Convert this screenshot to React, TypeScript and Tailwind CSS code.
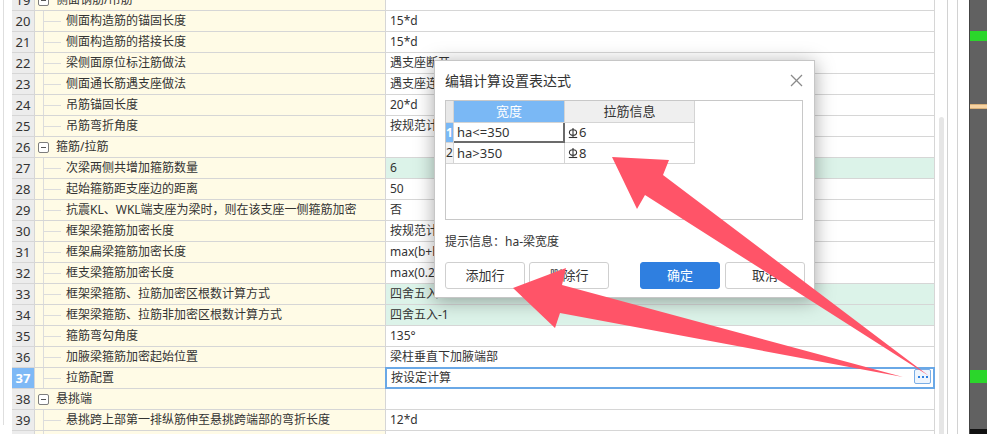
import React from "react";

type Row = {
  n: number;
  name: string;
  value?: string;
  group?: boolean;
  green?: boolean;
  selected?: boolean;
};

const rows: Row[] = [
  { n: 19, name: "侧面钢筋/吊筋", group: true },
  { n: 20, name: "侧面构造筋的锚固长度", value: "15*d" },
  { n: 21, name: "侧面构造筋的搭接长度", value: "15*d" },
  { n: 22, name: "梁侧面原位标注筋做法", value: "遇支座断开" },
  { n: 23, name: "侧面通长筋遇支座做法", value: "遇支座连续通过" },
  { n: 24, name: "吊筋锚固长度", value: "20*d" },
  { n: 25, name: "吊筋弯折角度", value: "按规范计算" },
  { n: 26, name: "箍筋/拉筋", group: true },
  { n: 27, name: "次梁两侧共增加箍筋数量", value: "6", green: true },
  { n: 28, name: "起始箍筋距支座边的距离", value: "50" },
  { n: 29, name: "抗震KL、WKL端支座为梁时，则在该支座一侧箍筋加密", value: "否" },
  { n: 30, name: "框架梁箍筋加密长度", value: "按规范计算" },
  { n: 31, name: "框架扁梁箍筋加密长度", value: "max(b+hb,lae,C)" },
  { n: 32, name: "框支梁箍筋加密长度", value: "max(0.2*Ln,1.5*hb)" },
  { n: 33, name: "框架梁箍筋、拉筋加密区根数计算方式", value: "四舍五入+1", green: true },
  { n: 34, name: "框架梁箍筋、拉筋非加密区根数计算方式", value: "四舍五入-1", green: true },
  { n: 35, name: "箍筋弯勾角度", value: "135°" },
  { n: 36, name: "加腋梁箍筋加密起始位置", value: "梁柱垂直下加腋端部" },
  { n: 37, name: "拉筋配置", value: "按设定计算", selected: true },
  { n: 38, name: "悬挑端", group: true },
  { n: 39, name: "悬挑跨上部第一排纵筋伸至悬挑跨端部的弯折长度", value: "12*d" },
  { n: 40, name: "", value: "" },
];

function RebarMark() {
  return (
    <svg width="10" height="12" viewBox="0 0 10 12" className="mr-[1px] inline-block">
      <ellipse cx="5" cy="5.5" rx="3.6" ry="2.8" fill="none" stroke="#333" strokeWidth="1.1" />
      <line x1="5" y1="1" x2="5" y2="10" stroke="#333" strokeWidth="1.1" />
      <line x1="0.8" y1="10.5" x2="9.2" y2="10.5" stroke="#333" strokeWidth="1.1" />
    </svg>
  );
}

function TableRow({ row }: { row: Row }) {
  const cell = "h-[21px] border-b border-r border-[#d6d6d6] flex items-center";
  return (
    <div className="flex">
      <div
        className={`${cell} w-[23px] justify-center text-[13px] ${
          row.selected ? "bg-[#7eb9f6] font-bold text-white" : "bg-[#ececec] text-[#333]"
        }`}
      >
        {row.n}
      </div>
      <div className={`${cell} w-[351px] bg-[#fffbe6] text-[12px] text-[#333]`}>
        {row.group ? (
          <>
            <div className="ml-[3px] flex h-[11px] w-[11px] items-center justify-center rounded-[2px] border border-[#7d7d7d] bg-white">
              <div className="h-px w-[5px] bg-[#555]" />
            </div>
            <span className="ml-[7px]">{row.name}</span>
          </>
        ) : (
          <>
            <div className="ml-[8px] flex h-full w-[18px] items-center border-l border-[#dcdcdc]">
              <div className="h-px w-full bg-[#dcdcdc]" />
            </div>
            <span className="ml-[5px] whitespace-nowrap">{row.name}</span>
          </>
        )}
      </div>
      <div
        className={`${cell} relative w-[549px] pl-[4px] text-[12px] text-[#333] ${
          row.green ? "bg-[#dcf3e9]" : "bg-white"
        }`}
      >
        <span className={row.selected ? "pl-[1px]" : ""}>{row.value}</span>
        {row.selected && (
          <>
            <div className="absolute -top-px -left-px -right-px -bottom-px border-2 border-[#6aa8e6]" />
            <div className="absolute right-[3px] top-[1px] flex h-[15px] w-[17px] items-center justify-center gap-[2px] rounded-[2px] border border-[#7aaee6] bg-[#eef5fd]">
              <div className="h-[2px] w-[2px] bg-[#2f7fe0]" />
              <div className="h-[2px] w-[2px] bg-[#2f7fe0]" />
              <div className="h-[2px] w-[2px] bg-[#2f7fe0]" />
            </div>
          </>
        )}
      </div>
    </div>
  );
}

function Dialog() {
  const btn =
    "flex h-[27px] w-[80px] items-center justify-center rounded-[3px] border text-[13px]";
  return (
    <div className="absolute left-[434px] top-[60px] flex h-[238px] w-[381px] flex-col border border-[#c6c6c6] bg-white shadow-[0_3px_18px_rgba(0,0,0,0.35)]">
      <div className="flex h-[39px] items-center justify-between pl-[10px] pr-[11px]">
        <span className="text-[14px] text-[#333]">编辑计算设置表达式</span>
        <svg width="13" height="13" viewBox="0 0 13 13">
          <line x1="1" y1="1" x2="12" y2="12" stroke="#8a8a8a" strokeWidth="1.2" />
          <line x1="12" y1="1" x2="1" y2="12" stroke="#8a8a8a" strokeWidth="1.2" />
        </svg>
      </div>
      <div className="mx-[10px] h-[120px] w-[358px] border border-[#c8c8c8] text-[13px] text-[#333]">
        <div className="flex h-[22px]">
          <div className="w-[8px] border-b border-r border-[#d4d4d4] bg-[#e8e8e8]" />
          <div className="flex w-[111px] items-center justify-center border-b border-r border-[#d4d4d4] bg-[#7ab8f5] text-white">
            宽度
          </div>
          <div className="flex w-[130px] items-center justify-center border-b border-r border-[#d4d4d4] bg-[#efefef]">
            拉筋信息
          </div>
        </div>
        <div className="flex h-[20px]">
          <div className="flex w-[8px] items-center justify-center border-b border-r border-[#d4d4d4] bg-[#7ab8f5] text-[12px] font-bold text-white">
            1
          </div>
          <div className="flex w-[111px] items-center border-b-2 border-r-2 border-[#6b6b6b] pl-[3px]">
            ha&lt;=350
          </div>
          <div className="flex w-[130px] items-center border-b border-r border-[#d4d4d4] pl-[3px]">
            <RebarMark />6
          </div>
        </div>
        <div className="flex h-[21px]">
          <div className="flex w-[8px] items-center justify-center border-b border-r border-[#d4d4d4] bg-[#f3f3f3] text-[12px]">
            2
          </div>
          <div className="flex w-[111px] items-center border-b border-r border-[#d4d4d4] pl-[3px]">
            ha&gt;350
          </div>
          <div className="flex w-[130px] items-center border-b border-r border-[#d4d4d4] pl-[3px]">
            <RebarMark />8
          </div>
        </div>
      </div>
      <div className="ml-[10px] mt-[12px] flex h-[20px] items-center text-[12px] text-[#333]">
        提示信息：ha-梁宽度
      </div>
      <div className="ml-[10px] mt-[10px] flex">
        <div className={`${btn} border-[#cfcfcf] bg-white text-[#333]`}>添加行</div>
        <div className={`${btn} ml-[4px] border-[#cfcfcf] bg-white text-[#333]`}>删除行</div>
        <div className={`${btn} ml-[31px] border-[#2f7fe0] bg-[#2f7fe0] text-white`}>确定</div>
        <div className={`${btn} ml-[5px] border-[#cfcfcf] bg-white text-[#333]`}>取消</div>
      </div>
    </div>
  );
}

function Arrows() {
  return (
    <svg
      className="pointer-events-none absolute left-0 top-0"
      width="987"
      height="434"
      viewBox="0 0 987 434"
    >
      <polygon
        points="612,157 669,160 663,175 929,376 645,195 637,209"
        fill="#ff5468"
      />
      <polygon
        points="513,288 566,268 562,285 903,377 560,313 555,328"
        fill="#ff5468"
      />
    </svg>
  );
}

export default function App() {
  return (
    <div className="relative flex h-[434px] w-[987px] overflow-hidden bg-white font-['Noto_Sans','Noto_Sans_CJK_SC',sans-serif] leading-none">
      {/* left strip */}
      <div className="flex w-[12px]">
        <div className="ml-[3px] h-[425px] w-px bg-[#dedede]" />
      </div>

      {/* property table */}
      <div className="-mt-[10px] flex w-[923px] flex-col">
        {rows.map((r) => (
          <TableRow key={r.n} row={r} />
        ))}
      </div>

      {/* scroll area */}
      <div className="flex w-[12px] justify-center">
        <div className="ml-[1px] mt-[117px] h-[320px] w-[5px] rounded-t-[3px] bg-[#e6e6e6]" />
      </div>
      <div className="w-[10px] border-l border-[#d2d2d2]" />
      <div className="w-[12px] border-l border-[#d2d2d2]" />

      {/* side strip */}
      <div className="flex w-[18px] flex-col border-l border-[#444] bg-[#616161]">
        <div className="mt-[31px] h-[10px] bg-[#2bd62b]" />
        <div className="mt-[63px] h-[5px] border-y border-[#d9b07a] bg-[#f6d3a3]" />
        <div className="mt-[261px] h-[13px] bg-[#2bd62b]" />
        <div className="mt-[46px] h-[5px] bg-[#111]" />
      </div>

      <Dialog />
      <Arrows />
    </div>
  );
}
